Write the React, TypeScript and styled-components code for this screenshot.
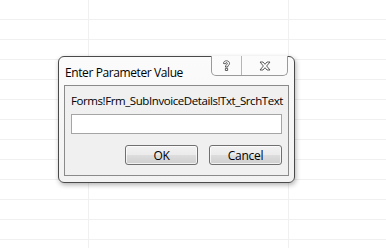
import * as React from "react";
import styled, { createGlobalStyle } from "styled-components";

const GlobalStyle = createGlobalStyle`
  html, body {
    margin: 0;
    padding: 0;
    background: #ffffff;
  }
`;

const Sheet = styled.div`
  width: 386px;
  height: 248px;
  box-sizing: border-box;
  padding: 56px 0 0 58px;
  background-color: #ffffff;
  background-image:
    linear-gradient(to right, transparent 88px, #f0f0f0 88px, #f0f0f0 89px, transparent 89px,
      transparent 288px, #f0f0f0 288px, #f0f0f0 289px, transparent 289px),
    repeating-linear-gradient(to bottom, transparent 0, transparent 19px, #f0f0f0 19px, #f0f0f0 20px);
  font-family: "Open Sans", "Noto Sans", sans-serif;
  overflow: hidden;
`;

const Window = styled.div`
  width: 237px;
  height: 127px;
  box-sizing: border-box;
  border: 1px solid #4a4a4a;
  border-radius: 6px;
  background: linear-gradient(to bottom, #fbfbfb, #f2f2f2);
  box-shadow: 1px 2px 5px rgba(0, 0, 0, 0.3);
  display: flex;
  flex-direction: column;
`;

const TitleBar = styled.div`
  height: 28px;
  display: flex;
  align-items: flex-start;
  justify-content: space-between;
`;

const Title = styled.div`
  font-size: 12px;
  color: #000;
  padding: 7px 0 0 6px;
  letter-spacing: -0.4px;
`;

const CaptionButtons = styled.div`
  display: flex;
  margin-right: 6px;
  margin-top: -1px;
  height: 20px;
  box-sizing: border-box;
  border: 1px solid #9a9a9a;
  border-top: none;
  border-radius: 0 0 5px 5px;
  background: #fbfbfb;
`;

const CaptionButton = styled.div<{ $w: number; $divider?: boolean }>`
  width: ${(p) => p.$w}px;
  height: 100%;
  display: flex;
  align-items: center;
  justify-content: center;
  border-right: ${(p) => (p.$divider ? "1px solid #b5b5b5" : "none")};
`;

const Panel = styled.div`
  margin: 0 5px 6px 5px;
  flex: 1;
  border: 1px solid #8a8a8a;
  background: #f0f0f0;
  display: flex;
  flex-direction: column;
  padding: 0 6px;
`;

const Label = styled.div`
  font-size: 11.5px;
  color: #000;
  margin-top: 7px;
  white-space: nowrap;
  letter-spacing: -0.42px;
`;

const Input = styled.div`
  margin-top: 6px;
  height: 20px;
  box-sizing: border-box;
  border: 1px solid #a5a5a5;
  background: #ffffff;
`;

const ButtonRow = styled.div`
  margin-top: 11px;
  display: flex;
  justify-content: flex-end;
  gap: 11px;
`;

const Button = styled.div`
  width: 73px;
  height: 20px;
  box-sizing: border-box;
  border: 1px solid #707070;
  border-radius: 3px;
  background: linear-gradient(to bottom, #f2f2f2 0%, #ebebeb 50%, #dddddd 51%, #cfcfcf 100%);
  box-shadow: inset 0 0 0 1px rgba(255, 255, 255, 0.7);
  display: flex;
  align-items: center;
  justify-content: center;
  font-size: 12px;
  letter-spacing: -0.3px;
  color: #000;
`;

const HelpIcon = () => (
  <svg width="9" height="12" viewBox="0 0 9 12">
    <path
      d="M1.5 3.5 C1.5 1.5 3 0.8 4.5 0.8 C6.3 0.8 7.5 2 7.5 3.4 C7.5 5 5.8 5.4 5.6 7 L3.4 7 C3.4 5 5.3 4.6 5.3 3.5 C5.3 2.9 5 2.6 4.5 2.6 C3.9 2.6 3.6 3 3.6 3.8 Z M3.4 8.3 L5.6 8.3 L5.6 10.5 L3.4 10.5 Z"
      fill="#ffffff"
      stroke="#4a4a4a"
      strokeWidth="0.9"
      strokeLinejoin="round"
    />
  </svg>
);

const CloseIcon = () => (
  <svg width="12" height="10" viewBox="0 0 12 10">
    <path
      d="M1 1 L4 1 L6 3.3 L8 1 L11 1 L7.6 5 L11 9 L8 9 L6 6.7 L4 9 L1 9 L4.4 5 Z"
      fill="#ffffff"
      stroke="#4a4a4a"
      strokeWidth="0.9"
      strokeLinejoin="round"
    />
  </svg>
);

export default function App() {
  return (
    <>
      <GlobalStyle />
      <Sheet>
        <Window>
          <TitleBar>
            <Title>Enter Parameter Value</Title>
            <CaptionButtons>
              <CaptionButton $w={29} $divider>
                <HelpIcon />
              </CaptionButton>
              <CaptionButton $w={45}>
                <CloseIcon />
              </CaptionButton>
            </CaptionButtons>
          </TitleBar>
          <Panel>
            <Label>Forms!Frm_SubInvoiceDetails!Txt_SrchText</Label>
            <Input />
            <ButtonRow>
              <Button>OK</Button>
              <Button>Cancel</Button>
            </ButtonRow>
          </Panel>
        </Window>
      </Sheet>
    </>
  );
}
